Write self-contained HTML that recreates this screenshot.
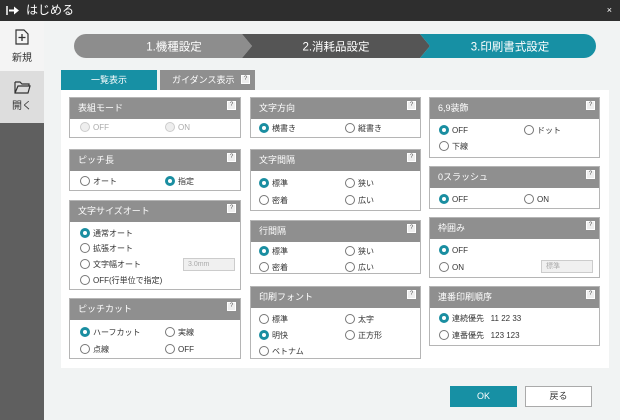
<!DOCTYPE html><html><head><meta charset="utf-8"><style>
*{box-sizing:border-box;margin:0;padding:0}
body{width:620px;height:420px;overflow:hidden;background:#f1f3f3;font-family:"Liberation Sans","Noto Sans CJK JP",sans-serif;position:relative;font-size:8px;color:#333}
.a{position:absolute}
.title{left:0;top:0;width:620px;height:21px;background:#2e2e2e;color:#fff;font-size:12px;line-height:21px;padding-left:26px}
.side{left:0;top:21px;width:44px;height:399px;background:#5f5f5f}
.pn{position:absolute;background:#fff;border:1px solid #b5b5b5}
.pn .h{height:21px;background:#8f8f8f;color:#fff;font-size:9px;line-height:21px;padding-left:8px;position:relative}
.q{position:absolute;right:4px;top:3px;width:9px;height:9px;border:1px solid #fff;background:#eee;color:#555;font-size:6px;line-height:7px;text-align:center}
.r{position:absolute;font-size:8px;line-height:10px;white-space:nowrap}
.r i{display:inline-block;width:10px;height:10px;border:1px solid #777;border-radius:50%;vertical-align:-2px;margin-right:3px;background:#fff}
.r i.on{border:3px solid #1a8ea1}
.dis{color:#aaa}.dis i{border-color:#ccc;background:#eee}
.sel{position:absolute;border:1px solid #ccc;background:#f0f0f0;color:#aaa;font-size:7px;line-height:11px;padding-left:4px;height:13px}
</style></head><body>
<div class="a title">はじめる<span style="position:absolute;right:8px;font-size:9px">×</span></div>
<svg class="a" style="left:6px;top:6px" width="14" height="9" viewBox="0 0 14 9"><path d="M1 0v9" stroke="#fff" stroke-width="1.5"/><path d="M3 4.5h6" stroke="#fff" stroke-width="2"/><path d="M8 0.5l5 4-5 4z" fill="#fff"/></svg>
<div class="a side"></div>
<div class="a" style="left:0;top:21px;width:44px;height:50px;background:#f4f4f4;text-align:center;font-size:10px">
<svg width="14" height="16" style="margin-top:8px" viewBox="0 0 14 16"><path d="M1 1h8l4 4v10H1z" fill="none" stroke="#333" stroke-width="1.2"/><path d="M7 5v7M3.5 8.5h7" stroke="#333" stroke-width="1.3"/></svg><div style="margin-top:1px">新規</div></div>
<div class="a" style="left:0;top:71px;width:44px;height:52px;background:#ddd;text-align:center;font-size:10px">
<svg width="17" height="14" style="margin-top:9px" viewBox="0 0 17 14"><path d="M1 2h5l2 2h7v2M1 2v11h13l2-7H4l-3 7" fill="none" stroke="#333" stroke-width="1.2"/></svg><div>開く</div></div>
<svg class="a" style="left:74px;top:34px" width="522" height="24" viewBox="0 0 522 24">
<path d="M12 0H168l10 12-10 12H12A12 12 0 0 1 12 0z" fill="#8d8d8d"/>
<path d="M168 0H346l10 12-10 12H168l10-12z" fill="#555"/>
<path d="M346 0H510a12 12 0 0 1 0 24H346l10-12z" fill="#1790a4"/>
<text x="100" y="16.5" fill="#fff" font-size="11.5" text-anchor="middle" font-family="Liberation Sans,Noto Sans CJK JP,sans-serif">1.機種設定</text>
<text x="262" y="16.5" fill="#fff" font-size="11.5" text-anchor="middle" font-family="Liberation Sans,Noto Sans CJK JP,sans-serif">2.消耗品設定</text>
<text x="436" y="16.5" fill="#fff" font-size="11.5" text-anchor="middle" font-family="Liberation Sans,Noto Sans CJK JP,sans-serif">3.印刷書式設定</text></svg>
<div class="a" style="left:61px;top:70px;width:96px;height:20px;background:#1790a4;color:#fff;font-size:9px;text-align:center;line-height:20px">一覧表示</div>
<div class="a" style="left:160px;top:70px;width:95px;height:20px;background:#8f8f8f;color:#fff;font-size:9px;line-height:20px;padding-left:12px">ガイダンス表示<span class="q" style="top:5px;right:5px">?</span></div>
<div class="a" style="left:61px;top:90px;width:548px;height:278px;background:#fff"></div>

<div class="pn" style="left:69px;top:97px;width:172px;height:41px"><div class="h">表組モード<span class="q">?</span></div>
<div class="r dis" style="left:10px;top:24px"><i></i>OFF</div><div class="r dis" style="left:95px;top:24px"><i></i>ON</div></div>
<div class="pn" style="left:69px;top:149px;width:172px;height:42px"><div class="h">ピッチ長<span class="q">?</span></div>
<div class="r" style="left:10px;top:26px"><i></i>オート</div><div class="r" style="left:95px;top:26px"><i class="on"></i>指定</div></div>
<div class="pn" style="left:69px;top:200px;width:172px;height:90px"><div class="h">文字サイズオート<span class="q">?</span></div>
<div class="r" style="left:10px;top:27px"><i class="on"></i>通常オート</div><div class="r" style="left:10px;top:42px"><i></i>拡張オート</div>
<div class="r" style="left:10px;top:58px"><i></i>文字幅オート</div><div class="sel" style="left:113px;top:57px;width:52px">3.0mm</div>
<div class="r" style="left:10px;top:74px"><i></i>OFF(行単位で指定)</div></div>
<div class="pn" style="left:69px;top:298px;width:172px;height:61px"><div class="h">ピッチカット<span class="q">?</span></div>
<div class="r" style="left:10px;top:28px"><i class="on"></i>ハーフカット</div><div class="r" style="left:95px;top:28px"><i></i>実線</div>
<div class="r" style="left:10px;top:45px"><i></i>点線</div><div class="r" style="left:95px;top:45px"><i></i>OFF</div></div>

<div class="pn" style="left:250px;top:97px;width:171px;height:41px"><div class="h">文字方向<span class="q">?</span></div>
<div class="r" style="left:8px;top:25px"><i class="on"></i>横書き</div><div class="r" style="left:94px;top:25px"><i></i>縦書き</div></div>
<div class="pn" style="left:250px;top:149px;width:171px;height:62px"><div class="h">文字間隔<span class="q">?</span></div>
<div class="r" style="left:8px;top:28px"><i class="on"></i>標準</div><div class="r" style="left:94px;top:28px"><i></i>狭い</div>
<div class="r" style="left:8px;top:45px"><i></i>密着</div><div class="r" style="left:94px;top:45px"><i></i>広い</div></div>
<div class="pn" style="left:250px;top:220px;width:171px;height:54px"><div class="h">行間隔<span class="q">?</span></div>
<div class="r" style="left:8px;top:25px"><i class="on"></i>標準</div><div class="r" style="left:94px;top:25px"><i></i>狭い</div>
<div class="r" style="left:8px;top:41px"><i></i>密着</div><div class="r" style="left:94px;top:41px"><i></i>広い</div></div>
<div class="pn" style="left:250px;top:286px;width:171px;height:73px"><div class="h">印刷フォント<span class="q">?</span></div>
<div class="r" style="left:8px;top:27px"><i></i>標準</div><div class="r" style="left:94px;top:27px"><i></i>太字</div>
<div class="r" style="left:8px;top:43px"><i class="on"></i>明快</div><div class="r" style="left:94px;top:43px"><i></i>正方形</div>
<div class="r" style="left:8px;top:59px"><i></i>ベトナム</div></div>

<div class="pn" style="left:429px;top:97px;width:171px;height:61px"><div class="h">6,9装飾<span class="q">?</span></div>
<div class="r" style="left:9px;top:27px"><i class="on"></i>OFF</div><div class="r" style="left:94px;top:27px"><i></i>ドット</div>
<div class="r" style="left:9px;top:43px"><i></i>下線</div></div>
<div class="pn" style="left:429px;top:166px;width:171px;height:43px"><div class="h">0スラッシュ<span class="q">?</span></div>
<div class="r" style="left:9px;top:27px"><i class="on"></i>OFF</div><div class="r" style="left:94px;top:27px"><i></i>ON</div></div>
<div class="pn" style="left:429px;top:217px;width:171px;height:61px"><div class="h">枠囲み<span class="q">?</span></div>
<div class="r" style="left:9px;top:27px"><i class="on"></i>OFF</div><div class="r" style="left:9px;top:44px"><i></i>ON</div>
<div class="sel" style="left:111px;top:42px;width:52px">標準</div></div>
<div class="pn" style="left:429px;top:286px;width:171px;height:60px"><div class="h">連番印刷順序<span class="q">?</span></div>
<div class="r" style="left:9px;top:26px"><i class="on"></i>連続優先 &nbsp; 11 22 33</div>
<div class="r" style="left:9px;top:43px"><i></i>連番優先 &nbsp; 123 123</div></div>

<div class="a" style="left:450px;top:386px;width:67px;height:21px;background:#1790a4;color:#fff;font-size:9px;text-align:center;line-height:21px">OK</div>
<div class="a" style="left:525px;top:386px;width:67px;height:21px;background:#fff;border:1px solid #aaa;font-size:9px;text-align:center;line-height:19px">戻る</div>
</body></html>
